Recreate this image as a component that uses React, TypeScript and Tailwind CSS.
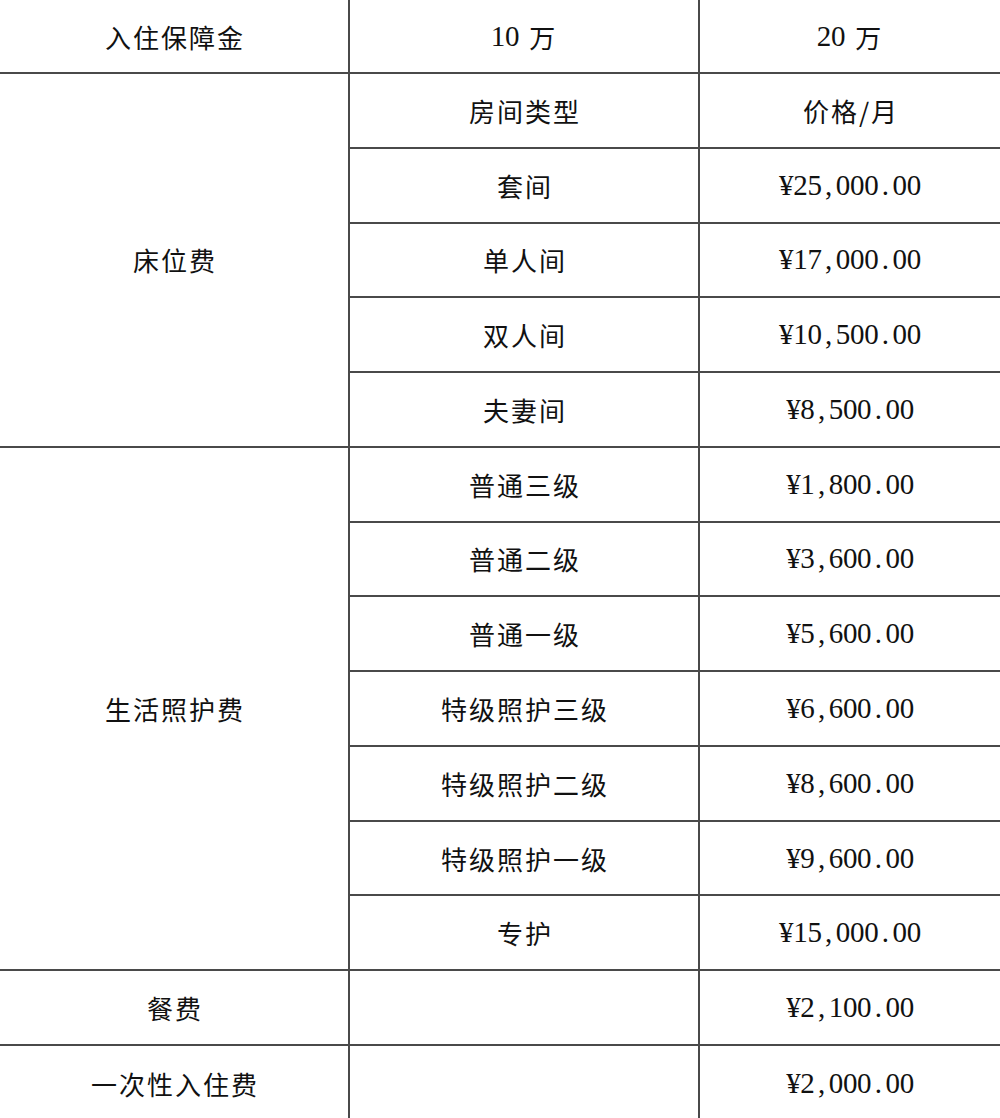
import React from "react";

const cjk = "font-['Noto_Sans_CJK_SC',sans-serif]";

// half-width characters in the original are fixed-width serif glyphs
const Mono = ({ text }: { text: string }) => (
  <span className="inline-flex font-['Liberation_Serif','Noto_Sans_CJK_SC',serif] text-[29px] leading-none">
    {text.split("").map((ch, i) => (
      <span key={i} className="inline-block w-[14.2px] text-center">
        {ch}
      </span>
    ))}
  </span>
);

const Zh = ({ text }: { text: string }) => (
  <span className={`${cjk} text-[26px] tracking-[2px] pl-[2px]`}>{text}</span>
);

const cell = "flex items-center justify-center border-[#4a4a4a] text-[#111]";

const rooms = [
  ["房间类型", "价格/月"],
  ["套间", "¥25,000.00"],
  ["单人间", "¥17,000.00"],
  ["双人间", "¥10,500.00"],
  ["夫妻间", "¥8,500.00"],
];

const care = [
  ["普通三级", "¥1,800.00"],
  ["普通二级", "¥3,600.00"],
  ["普通一级", "¥5,600.00"],
  ["特级照护三级", "¥6,600.00"],
  ["特级照护二级", "¥8,600.00"],
  ["特级照护一级", "¥9,600.00"],
  ["专护", "¥15,000.00"],
];

const Price = ({ v }: { v: string }) => (v.startsWith("¥") ? <Mono text={v} /> : <Zh text={v} />);

export default function App() {
  return (
    <div className="h-[1118px] w-[1000px] overflow-hidden bg-white">
      <div className="grid grid-cols-[350px_350px_300px] grid-rows-[74px_repeat(13,74.77px)_76px]">
        {/* header */}
        <div className={`${cell} border-r-2 border-b-2`}>
          <Zh text="入住保障金" />
        </div>
        <div className={`${cell} border-r-2 border-b-2`}>
          <Mono text="10" />
          <span className="w-[8px]" />
          <Zh text="万" />
        </div>
        <div className={`${cell} border-b-2`}>
          <Mono text="20" />
          <span className="w-[8px]" />
          <Zh text="万" />
        </div>

        {/* bed fee */}
        <div className={`${cell} row-span-5 border-r-2 border-b-2`}>
          <Zh text="床位费" />
        </div>
        {rooms.map(([a, b], i) => (
          <React.Fragment key={a}>
            <div className={`${cell} col-start-2 border-r-2 border-b-2`} style={{ gridRowStart: i + 2 }}>
              <Zh text={a} />
            </div>
            <div className={`${cell} col-start-3 border-b-2`} style={{ gridRowStart: i + 2 }}>
              <Price v={b} />
            </div>
          </React.Fragment>
        ))}

        {/* care fee */}
        <div className={`${cell} col-start-1 row-start-7 row-span-7 border-r-2 border-b-2`}>
          <Zh text="生活照护费" />
        </div>
        {care.map(([a, b], i) => (
          <React.Fragment key={a}>
            <div className={`${cell} col-start-2 border-r-2 border-b-2`} style={{ gridRowStart: i + 7 }}>
              <Zh text={a} />
            </div>
            <div className={`${cell} col-start-3 border-b-2`} style={{ gridRowStart: i + 7 }}>
              <Price v={b} />
            </div>
          </React.Fragment>
        ))}

        {/* meals */}
        <div className={`${cell} col-start-1 row-start-14 border-r-2 border-b-2`}>
          <Zh text="餐费" />
        </div>
        <div className={`${cell} col-start-2 row-start-14 border-r-2 border-b-2`} />
        <div className={`${cell} col-start-3 row-start-14 border-b-2`}>
          <Mono text="¥2,100.00" />
        </div>

        {/* one-time fee */}
        <div className={`${cell} col-start-1 row-start-15 border-r-2`}>
          <Zh text="一次性入住费" />
        </div>
        <div className={`${cell} col-start-2 row-start-15 border-r-2`} />
        <div className={`${cell} col-start-3 row-start-15`}>
          <Mono text="¥2,000.00" />
        </div>
      </div>
    </div>
  );
}
